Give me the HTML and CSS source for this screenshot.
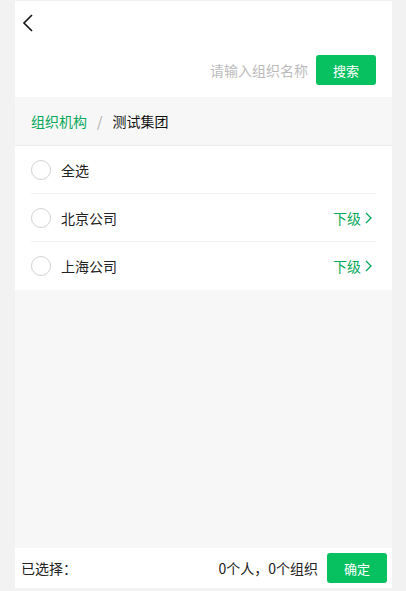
FILE: index.html
```html
<!DOCTYPE html>
<html lang="zh">
<head>
    <meta charset="UTF-8">
    <meta name="viewport" content="width=device-width, initial-scale=1.0">
    <title>选择组织</title>
    <link rel="stylesheet" href="styles.css">
</head>
<body>

    <div class="page">
        <div class="header">
            <div class="back-row">
                <svg class="back" width="12" height="18" viewBox="0 0 12 18">
                    <path d="M10 1 L2 9 L10 17" fill="none" stroke="#111" stroke-width="1.6"/>
                </svg>
            </div>
            <div class="search-row">
                <input type="text" class="search-input" placeholder="请输入组织名称">
                <button class="btn">搜索</button>
            </div>
        </div>

        <div class="crumbs">
            <span class="crumb-link">组织机构</span>
            <span class="crumb-sep">/</span>
            <span class="crumb-current">测试集团</span>
        </div>

        <ul class="list">
            <li class="item">
                <span class="radio"></span>
                <span class="name">全选</span>
            </li>
            <li class="item">
                <span class="radio"></span>
                <span class="name">北京公司</span>
                <span class="sub">下级
                    <svg width="7" height="12" viewBox="0 0 7 12"><path d="M1 1 L6 6 L1 11" fill="none" stroke="#07a85a" stroke-width="1.3"/></svg>
                </span>
            </li>
            <li class="item">
                <span class="radio"></span>
                <span class="name">上海公司</span>
                <span class="sub">下级
                    <svg width="7" height="12" viewBox="0 0 7 12"><path d="M1 1 L6 6 L1 11" fill="none" stroke="#07a85a" stroke-width="1.3"/></svg>
                </span>
            </li>
        </ul>

        <div class="spacer"></div>

        <div class="footer">
            <span class="selected-label">已选择：</span>
            <span class="count">0个人，0个组织</span>
            <button class="btn">确定</button>
        </div>
    </div>

</body>
</html>
```

FILE: styles.css
```css
body {
    margin: 0;
    background-color: #f2f2f2;
    font-family: "Noto Sans CJK SC", "Liberation Sans", sans-serif;
    font-size: 14px;
    color: #222;
}
.page {
    width: 377px;
    height: 587px;
    margin: 1px 14px 0 15px;
    background-color: #f7f7f7;
    display: flex;
    flex-direction: column;
}
.header {
    background-color: #fff;
    height: 96px;
    box-sizing: border-box;
}
.back-row {
    height: 44px;
    padding: 13px 0 0 7px;
    box-sizing: border-box;
}
.back {
    display: block;
}
.search-row {
    display: flex;
    justify-content: flex-end;
    align-items: center;
    margin-top: 10px;
    padding-right: 16px;
}
.search-input {
    border: none;
    outline: none;
    width: 110px;
    text-align: right;
    font-family: inherit;
    font-size: 14px;
    padding: 0;
    margin-right: 8px;
    background: transparent;
}
.search-input::placeholder {
    color: #bbb;
}
.btn {
    width: 60px;
    height: 30px;
    border: none;
    border-radius: 3px;
    background-color: #07c160;
    color: #fff;
    font-family: inherit;
    font-size: 13px;
    padding: 0;
}
.crumbs {
    height: 49px;
    box-sizing: border-box;
    padding: 0 16px;
    display: flex;
    align-items: center;
    border-bottom: 1px solid #ececec;
}
.crumb-link {
    color: #07a85a;
}
.crumb-sep {
    color: #aaa;
    margin: 0 10px;
}
.crumb-current {
    color: #111;
}
.list {
    list-style: none;
    margin: 0;
    padding: 0 16px;
    background-color: #fff;
}
.item {
    height: 48px;
    display: flex;
    align-items: center;
    border-bottom: 1px solid #f0f0f0;
    box-sizing: border-box;
}
.item:last-child {
    border-bottom: none;
}
.radio {
    width: 18px;
    height: 18px;
    border: 1px solid #d2d2d2;
    border-radius: 50%;
    margin-right: 10px;
}
.name {
    flex: 1;
}
.sub {
    color: #07a85a;
    display: flex;
    align-items: center;
    gap: 4px;
    margin-right: 4px;
}
.spacer {
    flex: 1;
}
.footer {
    height: 40px;
    background-color: #fff;
    display: flex;
    align-items: center;
    padding: 0 5px 0 6px;
}
.selected-label {
    flex: 1;
}
.count {
    margin-right: 9px;
}
```
